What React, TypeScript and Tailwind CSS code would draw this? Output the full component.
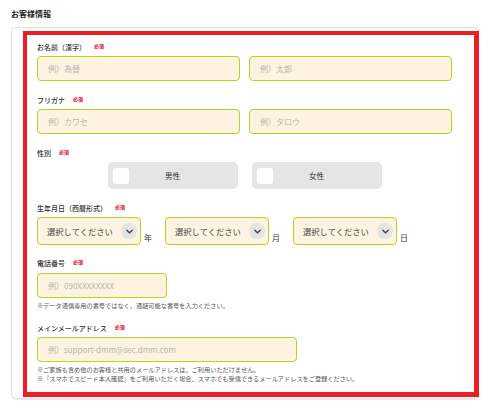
import React from "react";

const FONT = { fontFamily: '"Noto Sans CJK JP", "Noto Sans", sans-serif' };

function Label({ text, className = "" }: { text: string; className?: string }) {
  return (
    <div className={"flex items-center h-[10px] " + className}>
      <span className="text-[7px] leading-[10px] text-[#333] font-medium">{text}</span>
      <span className="ml-[8px] -mt-[3px] text-[5px] leading-[6px] text-[#e60012] font-bold">必須</span>
    </div>
  );
}

function Input({ placeholder, className = "" }: { placeholder: string; className?: string }) {
  return (
    <div
      className={
        "h-[25px] rounded-[4px] border-[1.5px] border-[#b0d620] bg-[#fdf3e0] flex items-center pl-[10px] text-[8px] text-[#b5b5b5] " +
        className
      }
    >
      {placeholder}
    </div>
  );
}

function Chevron() {
  return (
    <div className="w-[16px] h-[16px] rounded-full bg-[#e4e4e4] flex items-center justify-center">
      <svg width="9" height="9" viewBox="0 0 10 10">
        <path d="M2 3.5 L5 6.5 L8 3.5" fill="none" stroke="#444" strokeWidth="1.6" strokeLinecap="round" strokeLinejoin="round" />
      </svg>
    </div>
  );
}

function Select({ unit }: { unit: string }) {
  return (
    <div className="flex items-end">
      <div className="w-[104px] h-[28px] rounded-[4px] border-[1.5px] border-[#b0d620] bg-[#fdf3e0] flex items-center justify-between pl-[9px] pr-[3px]">
        <span className="text-[8.3px] text-[#444]">選択してください</span>
        <Chevron />
      </div>
      <span className="ml-[3px] mb-[1px] text-[8px] leading-[12px] text-[#333]">{unit}</span>
    </div>
  );
}

function Gender({ text }: { text: string }) {
  return (
    <div className="w-[130px] h-[27px] rounded-[5px] bg-[#e5e5e5] flex items-center pl-[5px]">
      <div className="w-[16px] h-[16px] rounded-[3px] bg-white" />
      <span className="flex-1 text-center pr-[21px] text-[7.5px] text-[#333]">{text}</span>
    </div>
  );
}

export default function App() {
  return (
    <div className="relative w-[500px] h-[411px] bg-white px-[11px] pt-[8px]" style={FONT}>
      <div className="h-[12px] flex items-center text-[8px] font-bold text-[#222]">お客様情報</div>
      <div className="mt-[7px] w-[468px] h-[372px] border border-[#e1e1e1] rounded-[5px] shadow-[0_1px_1px_rgba(0,0,0,0.08)] pt-[14px] pl-[25px] pr-[26px]">
        <Label text="お名前（漢字）" />
        <div className="mt-[4px] grid grid-cols-2 gap-[9px]">
          <Input placeholder="例）為替" />
          <Input placeholder="例）太郎" />
        </div>

        <Label text="フリガナ" className="mt-[14px]" />
        <div className="mt-[4px] grid grid-cols-2 gap-[9px]">
          <Input placeholder="例）カワセ" />
          <Input placeholder="例）タロウ" />
        </div>

        <Label text="性別" className="mt-[14px]" />
        <div className="mt-[4px] flex justify-center gap-[14px]">
          <Gender text="男性" />
          <Gender text="女性" />
        </div>

        <Label text="生年月日（西暦形式）" className="mt-[14px]" />
        <div className="mt-[4px] flex gap-[13px]">
          <Select unit="年" />
          <Select unit="月" />
          <Select unit="日" />
        </div>

        <Label text="電話番号" className="mt-[13px]" />
        <Input placeholder="例）090XXXXXXXX" className="mt-[5px] w-[130px]" />
        <div className="mt-[3px] text-[6.2px] leading-[9px] text-[#555]">
          ※データ通信専用の番号ではなく、通話可能な番号を入力ください。
        </div>

        <Label text="メインメールアドレス" className="mt-[13px]" />
        <Input placeholder="例）support-dmm@sec.dmm.com" className="mt-[4px] w-[260px]" />
        <div className="mt-[3px] text-[6.2px] leading-[9px] text-[#555]">
          <div>※ご家族も含め他のお客様と共用のメールアドレスは、ご利用いただけません。</div>
          <div>※『スマホでスピード本人確認』をご利用いただく場合、スマホでも受信できるメールアドレスをご登録ください。</div>
        </div>
      </div>

      <div className="absolute left-[23px] top-[31px] w-[456px] h-[366px] border-t-[4px] border-l-[4px] border-r-[5px] border-b-[5px] border-[#ee1c25] pointer-events-none" />
    </div>
  );
}
